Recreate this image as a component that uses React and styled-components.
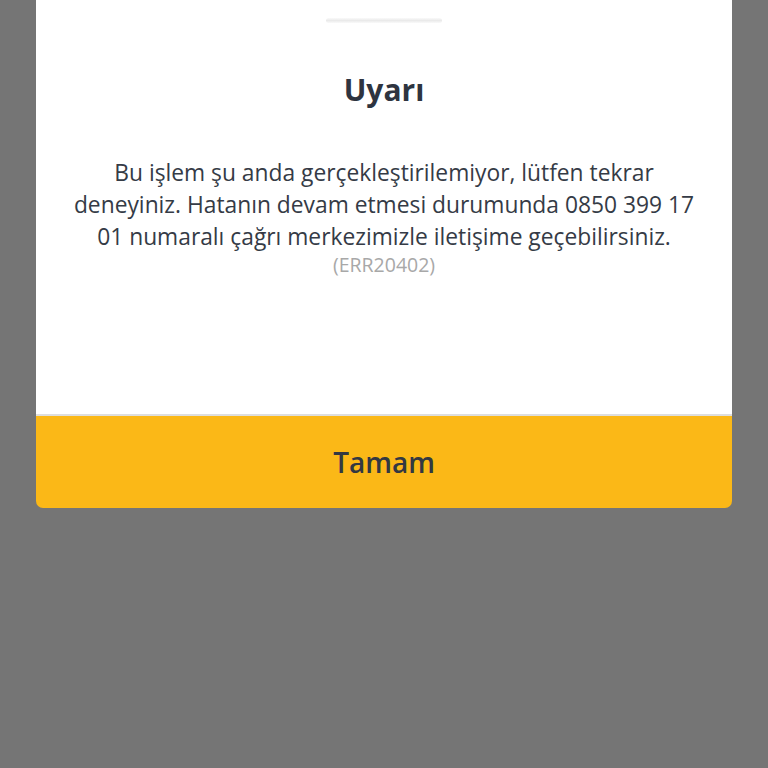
import styled, { createGlobalStyle } from "styled-components"

const Global = createGlobalStyle`
html, body { margin:0; padding:0; background:#757575; }
body { font-family:"Open Sans", "Noto Sans", sans-serif; }
`
const Page = styled.div`
width:768px;
height:768px;
background:#757575;
display:flex;
justify-content:center;
align-items:flex-start;
`
const Sheet = styled.div`
width:696px;
display:flex;
flex-direction:column;
border-radius:0 0 7px 7px;
overflow:hidden;
`
const Body = styled.div`
background:#fff;
height:414px;
display:flex;
flex-direction:column;
align-items:center;
padding:18px 30px 0;
box-sizing:border-box;
`
const Handle = styled.div`
width:116px;
height:5px;
border-radius:3px;
background:linear-gradient(to bottom, #fafafa, #eaeaea, #fafafa);
`
const Title = styled.h1`
margin:47px 0 0;
font-size:30px;
line-height:40px;
font-weight:700;
color:#2e3440;
`
const Message = styled.p`
margin:47px 0 0;
font-size:22.8px;
line-height:32px;
color:#353b46;
text-align:center;
`
const Code = styled.span`
margin-top:-1px;
font-size:19.5px;
line-height:26px;
color:#a8a8a8;
`
const Button = styled.button`
border:none;
border-top:2px solid #dedede;
background:#fbb817;
height:94px;
width:100%;
font-family:inherit;
font-size:28px;
font-weight:600;
color:#333842;
cursor:pointer;
`

const App = () => {
  return (
    <Page>
      <Global />
      <Sheet>
        <Body>
          <Handle />
          <Title>Uyarı</Title>
          <Message>
            Bu işlem şu anda gerçekleştirilemiyor, lütfen tekrar deneyiniz. Hatanın devam etmesi durumunda 0850 399 17 01 numaralı çağrı merkezimizle iletişime geçebilirsiniz.
          </Message>
          <Code>(ERR20402)</Code>
        </Body>
        <Button>Tamam</Button>
      </Sheet>
    </Page>
  )
}

export default App
